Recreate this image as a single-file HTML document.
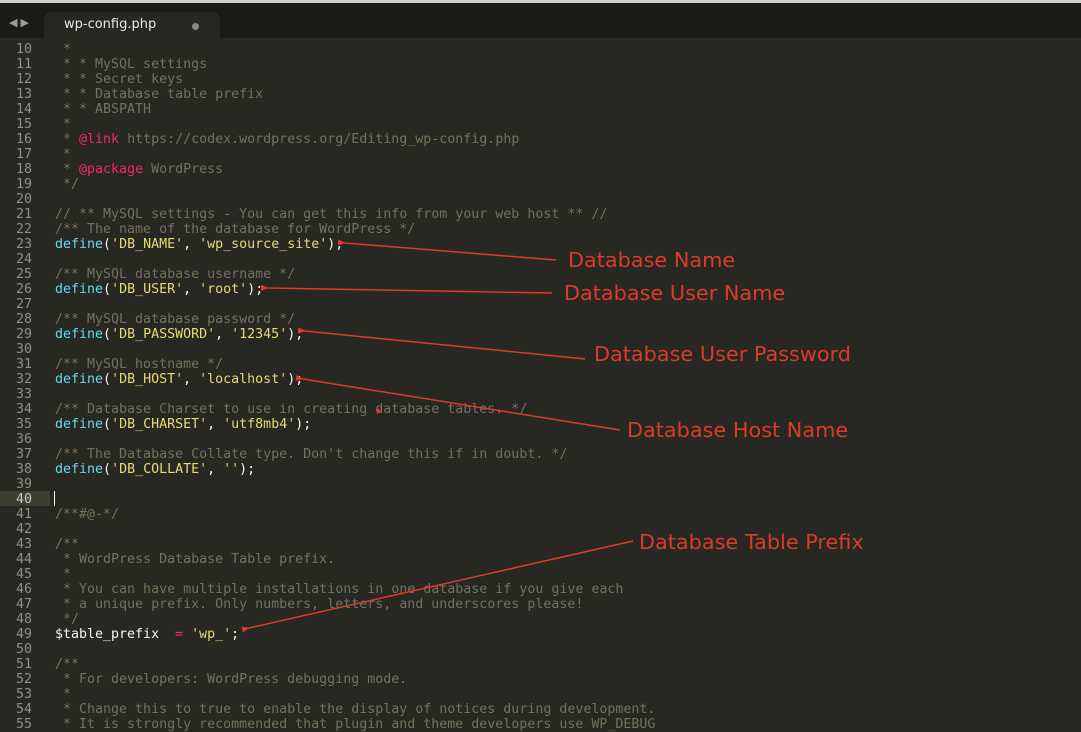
<!DOCTYPE html>
<html><head><meta charset="utf-8"><style>
html,body{margin:0;padding:0;width:1081px;height:722px;overflow:hidden;background:#272822;}
#top{position:absolute;left:0;top:0;width:1081px;height:38px;background:#1a1a17;border-top:3px solid #cfcfcf;box-sizing:border-box;}
#tab{position:absolute;left:44px;top:9px;width:176px;height:29px;background:#272822;border-radius:8px 8px 0 0;}
#tab span{position:absolute;left:20px;top:5px;font:13px "DejaVu Sans","Liberation Sans",sans-serif;color:#e8e8e8;}
#tab i{position:absolute;left:148px;top:11px;width:7px;height:7px;border-radius:50%;background:#8a8a86;}
#nav{position:absolute;left:9px;top:13px;font:11px "DejaVu Sans",sans-serif;color:#9a9a96;letter-spacing:3px;}
#gut{position:absolute;left:0;top:42px;width:40px;}
.ln{position:absolute;left:0;width:32px;text-align:right;height:15px;line-height:15px;font:13.3px "DejaVu Sans Mono","Liberation Mono",monospace;color:#8f908a;}
pre{position:absolute;left:55px;top:42px;margin:0;font:13.3px/15px "DejaVu Sans Mono","Liberation Mono",monospace;color:#f8f8f2;}
.c{color:#75715e}.k{color:#66d9ef}.s{color:#e6db74}.t{color:#f92672}
#hl{position:absolute;left:0;top:491px;width:50px;height:15px;background:#3e3d32;}
#cur{position:absolute;left:54px;top:491px;width:1px;height:15px;background:#f8f8f0;}
.lab{position:absolute;font:20.8px "DejaVu Sans","Liberation Sans",sans-serif;color:#db3b2a;white-space:nowrap;}
svg{position:absolute;left:0;top:0}
</style></head><body>
<div id="top"><div id="nav">◀▶</div><div id="tab"><span>wp-config.php</span><i></i></div></div>
<div id="hl"></div><div id="cur"></div>
<div id="gut"></div>
<pre><span class="c"> *
 * * MySQL settings
 * * Secret keys
 * * Database table prefix
 * * ABSPATH
 *
 * <span class="t">@link</span> https://codex.wordpress.org/Editing_wp-config.php
 *
 * <span class="t">@package</span> WordPress
 */</span>

<span class="c">// ** MySQL settings - You can get this info from your web host ** //
/** The name of the database for WordPress */</span>
<span class="k">define</span>(<span class="s">'DB_NAME'</span>, <span class="s">'wp_source_site'</span>);

<span class="c">/** MySQL database username */</span>
<span class="k">define</span>(<span class="s">'DB_USER'</span>, <span class="s">'root'</span>);

<span class="c">/** MySQL database password */</span>
<span class="k">define</span>(<span class="s">'DB_PASSWORD'</span>, <span class="s">'12345'</span>);

<span class="c">/** MySQL hostname */</span>
<span class="k">define</span>(<span class="s">'DB_HOST'</span>, <span class="s">'localhost'</span>);

<span class="c">/** Database Charset to use in creating database tables. */</span>
<span class="k">define</span>(<span class="s">'DB_CHARSET'</span>, <span class="s">'utf8mb4'</span>);

<span class="c">/** The Database Collate type. Don't change this if in doubt. */</span>
<span class="k">define</span>(<span class="s">'DB_COLLATE'</span>, <span class="s">''</span>);


<span class="c">/**#@-*/</span>

<span class="c">/**
 * WordPress Database Table prefix.
 *
 * You can have multiple installations in one database if you give each
 * a unique prefix. Only numbers, letters, and underscores please!
 */</span>
$table_prefix  <span class="t">=</span> <span class="s">'wp_'</span>;

<span class="c">/**
 * For developers: WordPress debugging mode.
 *
 * Change this to true to enable the display of notices during development.
 * It is strongly recommended that plugin and theme developers use WP_DEBUG</span>
</pre>
<script>
var g=document.getElementById('gut'),h='';
for(var n=10;n<=55;n++){h+='<div class="ln" style="top:'+((n-10)*15)+'px'+(n==40?';color:#c8c8c0':'')+'">'+n+'</div>';}
g.innerHTML=h;
</script>
<div class="lab" style="left:568px;top:248px">Database Name</div>
<div class="lab" style="left:564px;top:281px">Database User Name</div>
<div class="lab" style="left:594px;top:342px">Database User Password</div>
<div class="lab" style="left:627px;top:418px">Database Host Name</div>
<div class="lab" style="left:639px;top:530px">Database Table Prefix</div>
<svg width="1081" height="722">
<defs><marker id="a" markerWidth="8" markerHeight="6" refX="1" refY="3" orient="auto" markerUnits="userSpaceOnUse"><path d="M8,0 L0,3 L8,6 Z" fill="#db3b2a"/></marker></defs>
<g stroke="#db3b2a" stroke-width="1.5" fill="none">
<line x1="556" y1="260" x2="345" y2="243" marker-end="url(#a)"/>
<line x1="552" y1="293" x2="268" y2="288" marker-end="url(#a)"/>
<line x1="585" y1="359" x2="305" y2="331" marker-end="url(#a)"/>
<line x1="620" y1="430" x2="303" y2="379" marker-end="url(#a)"/>
<line x1="633" y1="541" x2="249" y2="628" marker-end="url(#a)"/>
</g>
<path d="M377,408 L382,411 L377,414 Z" fill="#db3b2a"/>
</svg>
</body></html>
